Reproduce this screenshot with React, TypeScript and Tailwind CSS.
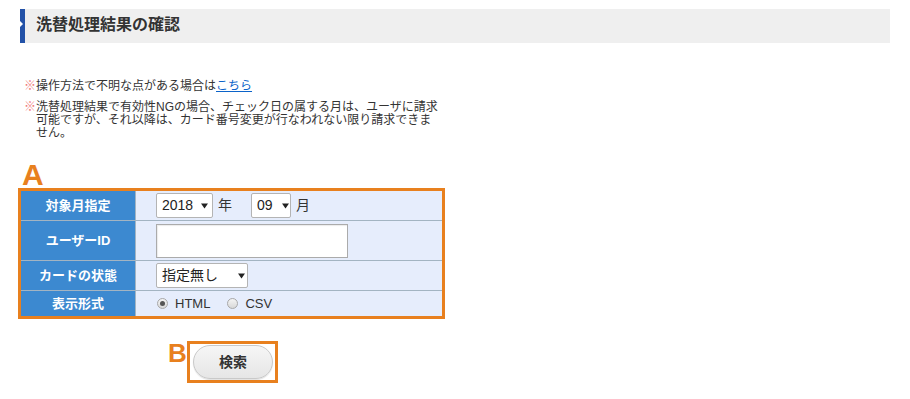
import React from 'react';

const FONT = "font-['Liberation_Sans','Noto_Sans_CJK_JP',sans-serif]";

function Caret() {
  return (
    <svg width="7" height="6" viewBox="0 0 7 6" className="shrink-0">
      <path d="M0 0.5 L7 0.5 L3.5 5.5 Z" fill="#222" />
    </svg>
  );
}

function FakeSelect({ value, width, gap }: { value: string; width: string; gap: string }) {
  return (
    <div className={`${width} h-[25px] bg-white border border-[#b4b4b4] rounded-[2px] flex items-center pl-[5px] ${gap} text-[14px] text-[#222]`}>
      <span>{value}</span>
      <Caret />
    </div>
  );
}

function Radio({ checked }: { checked?: boolean }) {
  return (
    <span className="w-[11px] h-[11px] rounded-full border border-[#a8a8a8] bg-gradient-to-b from-[#f4f4f4] to-[#d8d8d8] flex items-center justify-center">
      {checked && <span className="w-[5px] h-[5px] rounded-full bg-[#555]" />}
    </span>
  );
}

function HeadCell({ children }: { children: React.ReactNode }) {
  return (
    <div className="bg-[#3c89d0] text-white font-bold text-[13px] flex items-center justify-center">
      {children}
    </div>
  );
}

function DataCell({ children }: { children: React.ReactNode }) {
  return <div className="bg-[#e6edfc] flex items-center pl-[20px]">{children}</div>;
}

export default function App() {
  return (
    <div className={`w-[910px] h-[399px] bg-white text-[#333] ${FONT}`}>
      <div className="pt-[9px] pl-[20px] w-[890px]">
        {/* Title */}
        <div className="relative h-[34px] bg-[#efefef] border-l-[5px] border-[#2352a8] flex items-center pl-[11px]">
          <span className="absolute left-[-5px] top-[12px] w-0 h-0 border-y-[3px] border-y-transparent border-l-[3px] border-l-white" />
          <h1 className="text-[16px] font-bold leading-none pb-[3px]">洗替処理結果の確認</h1>
        </div>

        {/* Notes */}
        <div className="mt-[37px] text-[12px] leading-[13px] flex flex-col gap-[8px]">
          <div className="flex">
            <span className="ml-[4px] w-[12px] text-[#f07a7a]">※</span>
            <p>
              操作方法で不明な点がある場合は
              <a href="#" className="text-[#0b63c9] underline">こちら</a>
            </p>
          </div>
          <div className="flex">
            <span className="ml-[4px] w-[12px] text-[#f07a7a]">※</span>
            <p className="w-[405px]">
              洗替処理結果で有効性NGの場合、チェック日の属する月は、ユーザに請求可能ですが、それ以降は、カード番号変更が行なわれない限り請求できません。
            </p>
          </div>
        </div>

        {/* A */}
        <div className="mt-[20px] h-[28px] pl-[2px] text-[30px] leading-[30px] font-bold text-[#e8801e] font-['Liberation_Sans',sans-serif]">
          A
        </div>

        {/* Search form */}
        <div className="ml-[-2px] w-[427px] border-[3px] border-[#e8801e]">
          <div className="grid grid-cols-[114px_1fr] grid-rows-[29px_39px_29px_25px] gap-px bg-[#a3b4c2]">
            <HeadCell>対象月指定</HeadCell>
            <DataCell>
              <FakeSelect value="2018" width="w-[57px]" gap="gap-[8px]" />
              <span className="ml-[5px] text-[14px]">年</span>
              <div className="ml-[19px]">
                <FakeSelect value="09" width="w-[40px]" gap="gap-[9px]" />
              </div>
              <span className="ml-[5px] text-[14px]">月</span>
            </DataCell>

            <HeadCell>ユーザーID</HeadCell>
            <DataCell>
              <div className="w-[192px] h-[34px] bg-white border border-[#ababab] shadow-[inset_1px_1px_1px_rgba(0,0,0,0.08)]" />
            </DataCell>

            <HeadCell>カードの状態</HeadCell>
            <DataCell>
              <FakeSelect value="指定無し" width="w-[92px]" gap="gap-[20px]" />
            </DataCell>

            <HeadCell>表示形式</HeadCell>
            <DataCell>
              <label className="flex items-center gap-[7px] text-[13px] pl-[1px]">
                <Radio checked />
                HTML
              </label>
              <label className="ml-[17px] flex items-center gap-[7px] text-[13px]">
                <Radio />
                CSV
              </label>
            </DataCell>
          </div>
        </div>

        {/* B + button */}
        <div className="mt-[22px] ml-[148px] flex items-start">
          <span className="text-[26px] leading-[24px] font-bold text-[#e8801e] font-['Liberation_Sans',sans-serif] w-[19px]">
            B
          </span>
          <div className="w-[91px] h-[42px] border-[3px] border-[#e8801e] pl-[3px] pt-px">
            <button className="w-[80px] h-[34px] rounded-full border border-[#c9c9c9] bg-gradient-to-b from-[#f6f6f6] to-[#e6e6e6] text-[14px] font-bold text-[#333] shadow-[0_1px_1px_rgba(0,0,0,0.12)]">
              検索
            </button>
          </div>
        </div>
      </div>
    </div>
  );
}
